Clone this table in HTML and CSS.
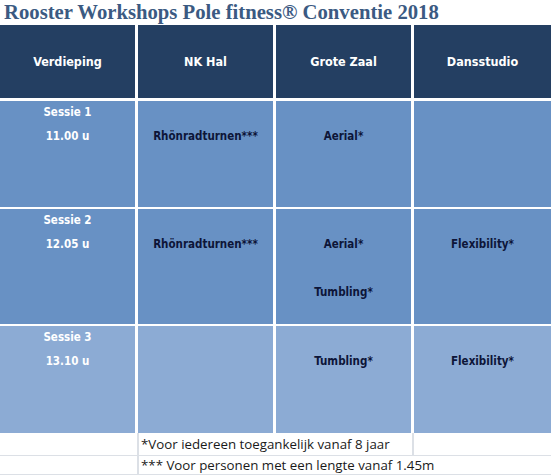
FILE: index.html
```html
<!DOCTYPE html>
<html lang="nl">
<head>
<meta charset="utf-8">
<title>Rooster Workshops</title>
<link rel="stylesheet" href="styles.css">
</head>
<body>
<h1 class="title">Rooster Workshops Pole fitness® Conventie 2018</h1>
<div class="schedule">
  <div class="head">Verdieping</div>
  <div class="head">NK Hal</div>
  <div class="head">Grote Zaal</div>
  <div class="head">Dansstudio</div>

  <div class="cell session"><div class="ln">Sessie 1</div><div class="ln">11.00 u</div></div>
  <div class="cell"><div class="ln"></div><div class="ln">Rhönradturnen***</div></div>
  <div class="cell"><div class="ln"></div><div class="ln">Aerial*</div></div>
  <div class="cell"></div>

  <div class="cell session"><div class="ln">Sessie 2</div><div class="ln">12.05 u</div></div>
  <div class="cell"><div class="ln"></div><div class="ln">Rhönradturnen***</div></div>
  <div class="cell"><div class="ln"></div><div class="ln">Aerial*</div><div class="ln"></div><div class="ln">Tumbling*</div></div>
  <div class="cell"><div class="ln"></div><div class="ln">Flexibility*</div></div>

  <div class="cell light session"><div class="ln">Sessie 3</div><div class="ln">13.10 u</div></div>
  <div class="cell light"></div>
  <div class="cell light"><div class="ln"></div><div class="ln">Tumbling*</div></div>
  <div class="cell light"><div class="ln"></div><div class="ln">Flexibility*</div></div>
</div>
<div class="notes">
  <div class="note"></div>
  <div class="note">*Voor iedereen toegankelijk vanaf 8 jaar</div>
  <div class="note"></div>
  <div class="note"></div>
  <div class="note wide">*** Voor personen met een lengte vanaf 1.45m</div>
</div>
</body>
</html>
```
FILE: styles.css
```css
html, body {
  margin: 0;
  padding: 0;
  background: #ffffff;
}
body {
  width: 551px;
  font-family: "DejaVu Sans Condensed", "DejaVu Sans", sans-serif;
}
.title {
  margin: 0;
  padding-left: 4px;
  height: 25px;
  line-height: 25px;
  font-family: "Liberation Serif", serif;
  font-weight: bold;
  font-size: 20.7px;
  color: #3b5a82;
  white-space: nowrap;
}
.schedule {
  display: grid;
  grid-template-columns: 135px 135px 135px 1fr;
  grid-template-rows: 76px 108px 117px 107px;
  column-gap: 3px;
  row-gap: 0;
}
.head {
  height: 73px;
  background: #243f62;
  color: #ffffff;
  font-weight: bold;
  font-size: 12.5px;
  display: flex;
  align-items: center;
  justify-content: center;
}
.cell {
  background: #6891c4;
  color: #0d1538;
  font-weight: bold;
  font-size: 11.5px;
  text-align: center;
  margin-bottom: 2px;
}
.cell.light {
  background: #8cabd4;
  margin-bottom: 0;
}
.cell .ln {
  height: 24px;
  line-height: 24px;
}
.cell .ln:first-child {
  margin-top: -1px;
}
.session {
  color: #ffffff;
}
.notes {
  display: grid;
  grid-template-columns: 137px 273px 1fr;
  grid-template-rows: 22px 18px;
  column-gap: 2px;
  row-gap: 1px;
  background: #dce0e6;
  padding-bottom: 1px;
}
.note {
  background: #ffffff;
  font-family: "Open Sans", sans-serif;
  font-size: 13.3px;
  color: #1a1a1a;
  padding-left: 2px;
  line-height: 22px;
  white-space: nowrap;
}
.note.wide {
  line-height: 18px;
  grid-column: span 2;
}
```
